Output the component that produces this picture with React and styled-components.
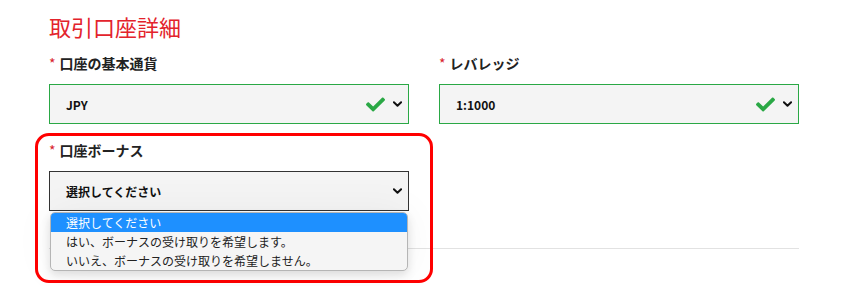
import React from 'react'
import styled, { createGlobalStyle } from 'styled-components'

const GlobalStyle = createGlobalStyle`
    body {
        margin: 0;
        background: #fff;
        font-family: "Noto Sans CJK JP", "Noto Sans", sans-serif;
        color: #222;
    }
`

function Check() {
    return (
        <CheckIcon viewBox="0 60 512 392" aria-hidden="true">
            <path d="M173.898 439.404l-166.4-166.4c-9.997-9.997-9.997-26.206 0-36.204l36.203-36.204c9.997-9.998 26.207-9.998 36.204 0L192 312.69 432.095 72.596c9.997-9.997 26.207-9.997 36.204 0l36.203 36.204c9.997 9.997 9.997 26.206 0 36.204l-294.4 294.401c-9.998 9.997-26.207 9.997-36.204-.001z" />
        </CheckIcon>
    )
}

function Chevron() {
    return (
        <ChevronIcon viewBox="0 0 10 6" aria-hidden="true">
            <polyline points="1,1 5,5 9,1" />
        </ChevronIcon>
    )
}

function Field({ label, value, valid, open, options }) {
    return (
        <FieldBox $marked={open}>
            <Label><Star>*</Star>{label}</Label>
            <SelectBox $valid={valid}>
                <span>{value}</span>
                <Icons>
                    {valid && <Check />}
                    <Chevron />
                </Icons>
            </SelectBox>
            {open && (
                <OptionList>
                    {options.map((o, i) => (
                        <Option key={o} $active={i === 0}>{o}</Option>
                    ))}
                </OptionList>
            )}
        </FieldBox>
    )
}

export default function App() {
    return (
        <>
            <GlobalStyle />
            <Page>
                <Title>取引口座詳細</Title>
                <Row>
                    <Field label="口座の基本通貨" value="JPY" valid />
                    <Field label="レバレッジ" value="1:1000" valid />
                </Row>
                <Row>
                    <Field
                        label="口座ボーナス"
                        value="選択してください"
                        open
                        options={[
                            '選択してください',
                            'はい、ボーナスの受け取りを希望します。',
                            'いいえ、ボーナスの受け取りを希望しません。',
                        ]}
                    />
                </Row>
                <Divider />
            </Page>
        </>
    )
}

const Page = styled.div`
    width: 799px;
    min-height: 286px;
    box-sizing: border-box;
    padding: 10px 0 0 49px;
`

const Title = styled.h2`
    margin: 0 0 11px;
    font-size: 22px;
    line-height: 32px;
    font-weight: 400;
    color: #e3232c;
`

const Row = styled.div`
    display: grid;
    grid-template-columns: 360px 360px;
    column-gap: 30px;
    & + & {
        margin-top: 16px;
    }
`

const FieldBox = styled.div`
    position: relative;
    z-index: 1;
    &::before {
        content: '';
        display: ${p => (p.$marked ? 'block' : 'none')};
        position: absolute;
        top: -7px;
        left: -14px;
        right: -24px;
        bottom: -72px;
        border: 3px solid #ff0000;
        border-radius: 14px;
        pointer-events: none;
    }
`

const Label = styled.div`
    font-size: 14px;
    line-height: 20px;
    font-weight: 700;
    color: #222;
    margin-bottom: 11px;
`

const Star = styled.span`
    color: #d9232d;
    font-weight: 400;
    margin-right: 4px;
`

const SelectBox = styled.div`
    height: 40px;
    box-sizing: border-box;
    display: flex;
    align-items: center;
    justify-content: space-between;
    padding: 0 6px 0 16px;
    background: #f4f4f4;
    border: 1px solid ${p => (p.$valid ? '#2aa845' : '#333')};
    font-size: 12px;
    font-weight: 700;
    color: #111;
`

const Icons = styled.div`
    display: flex;
    align-items: center;
    gap: 8px;
`

const CheckIcon = styled.svg`
    width: 19px;
    height: 15px;
    fill: #2aa845;
`

const ChevronIcon = styled.svg`
    width: 9px;
    height: 6px;
    fill: none;
    stroke: #111;
    stroke-width: 2.2;
    stroke-linecap: round;
    stroke-linejoin: round;
`

const OptionList = styled.div`
    position: absolute;
    top: calc(100% + 1px);
    left: 1px;
    right: 1px;
    background: #f5f5f5;
    border: 1px solid #b5b5b5;
    border-radius: 5px;
    overflow: hidden;
    box-shadow: 0 4px 10px rgba(0, 0, 0, 0.12), 0 0 40px rgba(0, 0, 0, 0.05);
`

const Option = styled.div`
    height: 19px;
    line-height: 19px;
    padding-left: 15px;
    font-size: 12px;
    color: ${p => (p.$active ? '#fff' : '#222')};
    background: ${p => (p.$active ? '#1e90ff' : 'transparent')};
`

const Divider = styled.div`
    margin-top: 37px;
    height: 1px;
    width: 750px;
    background: #e2e2e2;
`
